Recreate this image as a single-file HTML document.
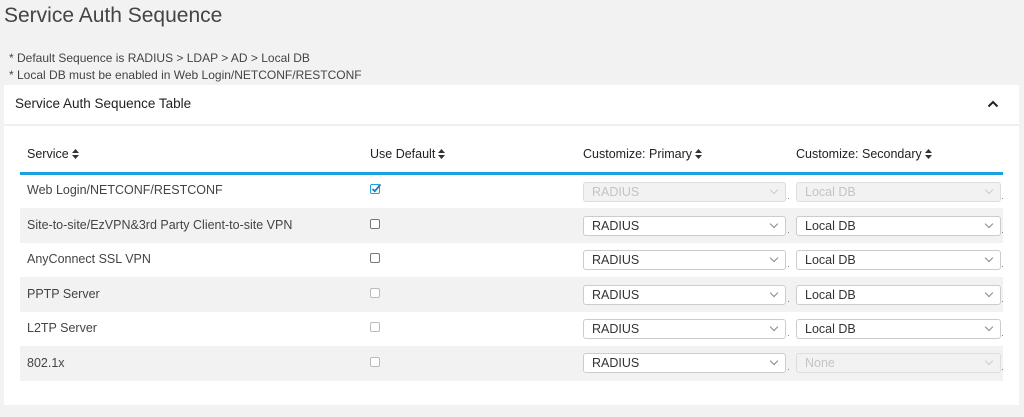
<!DOCTYPE html><html><head><style>
*{margin:0;padding:0;box-sizing:border-box}
body{width:1024px;height:417px;background:#f2f2f2;font-family:"Liberation Sans",sans-serif;color:#333;position:relative;overflow:hidden}
.a{position:absolute;white-space:nowrap}
.t{left:4px;top:4px;font-size:21px;color:#444}
.n{left:9px;font-size:12px;color:#444}
.panel{left:4px;top:85px;width:1015px;height:320px;background:#fff}
.ph{left:15px;top:96px;font-size:13.5px;color:#222}
.hr{left:4px;top:124px;width:1015px;height:2px;background:#f0f0f0}
.th{top:147px;font-size:12.5px;color:#222}
.th svg{vertical-align:-1px;margin-left:3px}
.blue{left:20px;top:172px;width:983px;height:3px;background:#1ba0e0}
.row{left:20px;width:983px;height:34.5px}
.g{background:#f2f2f2}
.c{font-size:12.5px;color:#444;left:27px}
.cb{width:10px;height:10px;border:1px solid #777;border-radius:2px;left:370px;background:#fff}
.cb.d{border-color:#bbb}
.sel{height:20px;border:1px solid #ccc;border-radius:3px;background:#fff;font-size:12.5px;color:#333;padding:2px 0 0 8px}
.sel.dis{background:#f2f2f2;color:#c4c4c4;border-color:#ddd}
.sel::after{content:"";position:absolute;right:8px;top:4px;width:5px;height:5px;border-right:1px solid #888;border-bottom:1px solid #888;transform:rotate(45deg)}
.sel.dis::after{border-color:#ccc}
.p{left:583px;width:203px}.s{left:796px;width:205px}
.dot{width:1px;height:1px;background:#888}
</style></head><body>
<div class="a t">Service Auth Sequence</div>
<div class="a n" style="top:51px">* Default Sequence is RADIUS &gt; LDAP &gt; AD &gt; Local DB</div>
<div class="a n" style="top:68px">* Local DB must be enabled in Web Login/NETCONF/RESTCONF</div>
<div class="a panel"></div>
<div class="a ph">Service Auth Sequence Table</div>
<svg class="a" style="left:987px;top:100px" width="12" height="8"><path d="M1.5 6.5L6 2L10.5 6.5" stroke="#222" stroke-width="2" fill="none"/></svg>
<div class="a hr"></div>
<div class="a th" style="left:27px">Service<svg width="7" height="10"><path d="M0 4L3.5 0L7 4ZM0 6L3.5 10L7 6Z" fill="#333"/></svg></div>
<div class="a th" style="left:370px">Use Default<svg width="7" height="10"><path d="M0 4L3.5 0L7 4ZM0 6L3.5 10L7 6Z" fill="#333"/></svg></div>
<div class="a th" style="left:583px">Customize: Primary<svg width="7" height="10"><path d="M0 4L3.5 0L7 4ZM0 6L3.5 10L7 6Z" fill="#333"/></svg></div>
<div class="a th" style="left:796px">Customize: Secondary<svg width="7" height="10"><path d="M0 4L3.5 0L7 4ZM0 6L3.5 10L7 6Z" fill="#333"/></svg></div>
<div class="a blue"></div>
<div class="a row" style="top:175px"></div>
<div class="a row g" style="top:208px"></div>
<div class="a row" style="top:242px"></div>
<div class="a row g" style="top:277px"></div>
<div class="a row" style="top:311px"></div>
<div class="a row g" style="top:346px"></div>

<div class="a c" style="top:183px">Web Login/NETCONF/RESTCONF</div>
<div class="a c" style="top:218px">Site-to-site/EzVPN&amp;3rd Party Client-to-site VPN</div>
<div class="a c" style="top:252px">AnyConnect SSL VPN</div>
<div class="a c" style="top:287px">PPTP Server</div>
<div class="a c" style="top:321px">L2TP Server</div>
<div class="a c" style="top:356px">802.1x</div>

<svg class="a" style="left:370px;top:183px" width="12" height="11"><rect x="0.5" y="1.5" width="9" height="9" rx="1.5" fill="#fff" stroke="#1ba0e0"/><path d="M2.5 6L4.8 8.2L10.5 1.5" stroke="#1b7ec0" stroke-width="1.8" fill="none"/></svg>
<div class="a cb" style="top:219px"></div>
<div class="a cb" style="top:253px"></div>
<div class="a cb d" style="top:288px"></div>
<div class="a cb d" style="top:322px"></div>
<div class="a cb d" style="top:357px"></div>

<div class="a sel p dis" style="top:182px">RADIUS</div><div class="a sel s dis" style="top:182px">Local DB</div>
<div class="a sel p" style="top:216px">RADIUS</div><div class="a sel s" style="top:216px">Local DB</div>
<div class="a sel p" style="top:250px">RADIUS</div><div class="a sel s" style="top:250px">Local DB</div>
<div class="a sel p" style="top:285px">RADIUS</div><div class="a sel s" style="top:285px">Local DB</div>
<div class="a sel p" style="top:319px">RADIUS</div><div class="a sel s" style="top:319px">Local DB</div>
<div class="a sel p" style="top:353px">RADIUS</div><div class="a sel s dis" style="top:353px">None</div>
<div class="a dot" style="left:788px;top:198px"></div><div class="a dot" style="left:1002px;top:198px"></div>
<div class="a dot" style="left:788px;top:232px"></div><div class="a dot" style="left:1002px;top:232px"></div>
<div class="a dot" style="left:788px;top:266px"></div><div class="a dot" style="left:1002px;top:266px"></div>
<div class="a dot" style="left:788px;top:301px"></div><div class="a dot" style="left:1002px;top:301px"></div>
<div class="a dot" style="left:788px;top:335px"></div><div class="a dot" style="left:1002px;top:335px"></div>
<div class="a dot" style="left:788px;top:369px"></div><div class="a dot" style="left:1002px;top:369px"></div>
</body></html>
